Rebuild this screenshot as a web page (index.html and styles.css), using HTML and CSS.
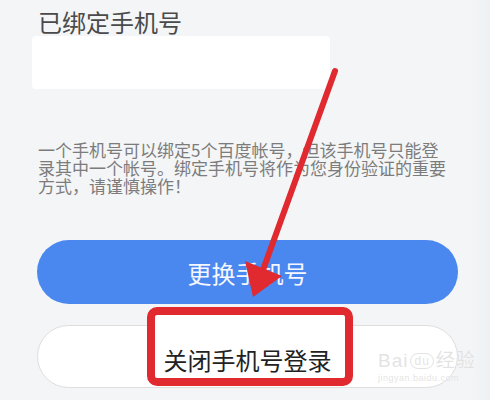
FILE: index.html
```html
<!DOCTYPE html>
<html lang="zh-CN">
<head>
  <meta charset="UTF-8" />
  <meta name="viewport" content="width=device-width, initial-scale=1" />
  <title>已绑定手机号</title>
  <link rel="stylesheet" href="styles.css">
</head>
<body>

<div class="page">
  <h2 class="title">已绑定手机号</h2>
  <div class="masked"></div>

  <p class="note">一个手机号可以绑定5个百度帐号，但该手机号只能登录其中一个帐号。绑定手机号将作为您身份验证的重要方式，请谨慎操作！</p>

  <div class="actions">
    <button class="btn btn-primary">更换手机号</button>
    <button class="btn btn-plain"><span class="btn-label">关闭手机号登录</span></button>
  </div>
</div>

<!-- annotation layer -->
<div class="mark-box"></div>

<svg class="arrow" width="490" height="400" viewBox="0 0 490 400">
  <line x1="335" y1="71" x2="263" y2="270" stroke="#e02a2f" stroke-width="6" stroke-linecap="round" />
  <polygon points="245,261 282,276 253,297" fill="#e02a2f" />
</svg>

<div class="watermark">
  <div class="wm-logo">Bai<span class="wm-paw">du</span>经验</div>
  <div class="wm-url">jingyan.baidu.com</div>
</div>

</body>
</html>
```

FILE: styles.css
```css
html, body {
  margin: 0;
  padding: 0;
  height: 100%;
  overflow: hidden;
  background: #f3f5f7;
  font-family: "Noto Sans CJK SC", "Noto Sans", sans-serif;
}

.page {
  position: relative;
  padding: 8px 0 0 38px;
  height: 392px;
  background: linear-gradient(to right, #f3f5f7 0, #f3f5f7 470px, #eef1f3 490px);
}

.title {
  margin: 0;
  font-size: 24px;
  line-height: 28px;
  font-weight: normal;
  color: #4a4a4a;
}

.masked {
  margin-left: -6px;
  width: 298px;
  height: 53px;
  background: #ffffff;
  border-radius: 4px;
}

.note {
  margin: 52px 0 0;
  width: 414px;
  font-size: 17px;
  line-height: 18px;
  color: #7c7c7c;
  text-spacing-trim: space-all;
}

.actions {
  margin-top: 45px;
  margin-left: -1px;
  display: flex;
  flex-direction: column;
  gap: 21px;
  width: 421px;
}

.btn {
  height: 64px;
  border-radius: 32px;
  font-family: inherit;
  font-size: 24px;
  padding: 0;
  cursor: pointer;
}

.btn-primary {
  border: none;
  background: #4a87ee;
  color: #f4f7ff;
}

.btn-plain {
  height: 63px;
  background: #ffffff;
  border: 1px solid #dedede;
  color: #222;
  padding-top: 6px;
}

.btn-label {
  position: relative;
  z-index: 2;
}

.mark-box {
  position: absolute;
  left: 147px;
  top: 307px;
  width: 190px;
  height: 63px;
  border: 8px solid #e02a2f;
  border-radius: 10px;
  background: #ffffff;
  z-index: 1;
}

.arrow {
  position: absolute;
  left: 0;
  top: 0;
  z-index: 3;
}

.watermark {
  position: absolute;
  left: 378px;
  top: 350px;
  z-index: 3;
  color: rgba(200, 200, 200, 0.5);
  text-shadow: 0 0 1px rgba(255, 255, 255, 0.9);
}

.wm-logo {
  font-family: "Liberation Sans", "Noto Sans CJK SC", sans-serif;
  font-size: 19px;
  line-height: 22px;
  letter-spacing: 1px;
}

.wm-paw {
  display: inline-block;
  font-size: 12px;
  line-height: 14px;
  padding: 0 3px;
  margin: 0 2px;
  border: 1px solid rgba(200, 200, 200, 0.5);
  border-radius: 8px;
  vertical-align: 2px;
}

.wm-url {
  font-family: "Liberation Sans", sans-serif;
  font-size: 9px;
  line-height: 12px;
  letter-spacing: 0.5px;
}
```
